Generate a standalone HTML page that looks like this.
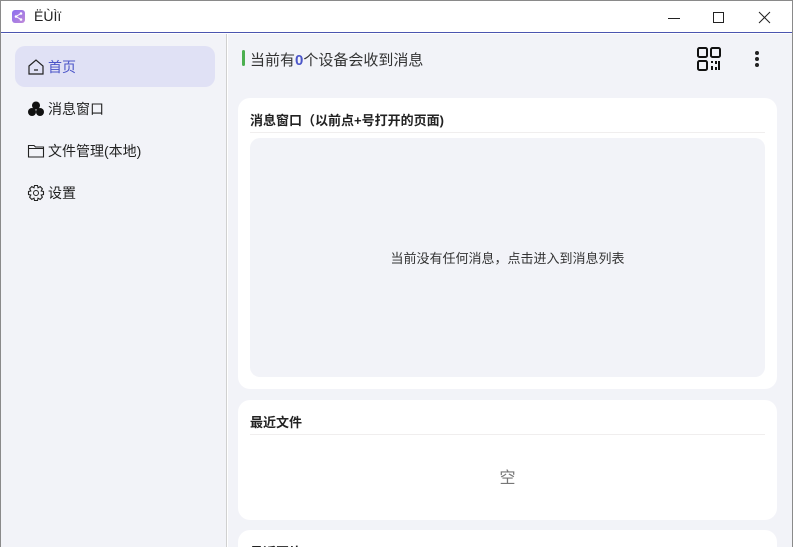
<!DOCTYPE html>
<html><head><meta charset="utf-8"><style>
*{margin:0;padding:0;box-sizing:border-box}
html,body{width:793px;height:547px;overflow:hidden}
body{background:#fff;font-family:"Liberation Sans","Noto Sans CJK SC",sans-serif;position:relative}
.win{position:absolute;left:0;top:0;width:793px;height:547px;border:1px solid #8a8a8a;border-bottom:none;z-index:5;pointer-events:none}
.title{position:absolute;left:1px;top:1px;right:1px;height:32px;background:#fff;border-bottom:1px solid #4b55b0}
.logo{position:absolute;left:11px;top:9px;width:13px;height:13px;border-radius:3px;background:linear-gradient(135deg,#8a6df0,#c08ad8)}
.ttext{position:absolute;left:33px;top:7px;font-size:14px;color:#222}
.side{position:absolute;left:1px;top:34px;width:226px;bottom:0;background:#f2f3f8;border-right:1px solid #d0d0d0}
.main{position:absolute;left:228px;top:34px;right:1px;bottom:0;background:#f2f3f8;overflow:hidden}
.nav{position:absolute;left:14px;width:200px;height:41px;font-size:14px;color:#222;display:flex;align-items:center;padding-left:12px}
.nav.act{background:#e0e1f5;border-radius:10px;color:#4b55c8}
.nav svg{margin-right:3px}
.card{position:absolute;left:10px;width:539px;background:#fff;border-radius:12px;overflow:hidden}
.ch{position:absolute;left:12px;right:12px;top:12px;font-size:13px;font-weight:bold;color:#222;height:23px;border-bottom:1px solid #f0eeee}
</style></head><body>
<div class="win"></div>
<div class="title"><div class="logo"></div>
<svg style="position:absolute;left:13px;top:11px" width="9" height="9" viewBox="0 0 9 9"><circle cx="7" cy="1.5" r="1.3" fill="#fff"/><circle cx="2" cy="4.5" r="1.3" fill="#fff"/><circle cx="7" cy="7.5" r="1.3" fill="#fff"/><path d="M7 1.5L2 4.5L7 7.5" stroke="#fff" fill="none"/></svg>
<div class="ttext">ËÙÌï</div>
<svg style="position:absolute;left:666px;top:10px" width="14" height="14"><path d="M1 7.5H13" stroke="#222"/></svg>
<svg style="position:absolute;left:710px;top:10px" width="14" height="14"><rect x="2.5" y="1.5" width="10" height="10" stroke="#222" fill="none"/></svg>
<svg style="position:absolute;left:756px;top:10px" width="14" height="14"><path d="M2 1L13 12M13 1L2 12" stroke="#222"/></svg>
</div>
<div class="side">
<div class="nav act" style="top:12px"><svg width="18" height="18" viewBox="0 0 18 18"><path d="M2 8L9 2L16 8V16H2Z M7 12H11" stroke="#222" stroke-width="1.2" fill="none"/></svg>首页</div>
<div class="nav" style="top:54px"><svg width="18" height="18" viewBox="0 0 18 18"><circle cx="9" cy="5.5" r="4" fill="#111"/><circle cx="5" cy="12" r="4" fill="#111"/><circle cx="13" cy="12" r="4" fill="#111"/></svg>消息窗口</div>
<div class="nav" style="top:96px"><svg width="18" height="18" viewBox="0 0 18 18"><path d="M1.5 3.5H7L8.5 5H16.5V15H1.5Z M1.5 6.5H16.5" stroke="#222" stroke-width="1.1" fill="none"/></svg>文件管理(本地)</div>
<div class="nav" style="top:138px"><svg width="18" height="18" viewBox="0 0 18 18"><circle cx="9" cy="9" r="2.5" stroke="#222" fill="none"/><path d="M7.5 1.5H10.5L11 3.8L13.2 2.6L15.4 4.8L14.2 7L16.5 7.5V10.5L14.2 11L15.4 13.2L13.2 15.4L11 14.2L10.5 16.5H7.5L7 14.2L4.8 15.4L2.6 13.2L3.8 11L1.5 10.5V7.5L3.8 7L2.6 4.8L4.8 2.6L7 3.8Z" stroke="#222" fill="none" stroke-width="1.1"/></svg>设置</div>
</div>
<div class="main">
<div style="position:absolute;left:14px;top:16px;width:3px;height:16px;background:#4caf50;border-radius:2px"></div>
<div style="position:absolute;left:22px;top:15px;font-size:15px;color:#333">当前有<span style="color:#4b55c8;font-weight:bold">0</span>个设备会收到消息</div>
<svg style="position:absolute;left:469px;top:13px" width="24" height="24" viewBox="0 0 24 24"><rect x="1" y="1" width="9" height="9" rx="1.5" stroke="#111" stroke-width="2" fill="none"/><rect x="14" y="1" width="9" height="9" rx="1.5" stroke="#111" stroke-width="2" fill="none"/><rect x="1" y="14" width="9" height="9" rx="1.5" stroke="#111" stroke-width="2" fill="none"/><path d="M14 14h2v2h-2zM18 14h2v3h-2zM14 19h2v4h-2zM18 20h2v3h-2zM21 14h2v9h-2z" fill="#111"/></svg>
<svg style="position:absolute;left:526px;top:16px" width="6" height="18"><circle cx="3" cy="3" r="2" fill="#222"/><circle cx="3" cy="9" r="2" fill="#222"/><circle cx="3" cy="15" r="2" fill="#222"/></svg>
<div class="card" style="top:64px;height:291px"><div class="ch">消息窗口（以前点+号打开的页面)</div>
<div style="position:absolute;left:12px;right:12px;top:40px;height:239px;background:#f2f3f8;border-radius:10px;display:flex;align-items:center;justify-content:center;font-size:13px;color:#333">当前没有任何消息，点击进入到消息列表</div></div>
<div class="card" style="top:366px;height:120px"><div class="ch">最近文件</div>
<div style="position:absolute;left:0;right:0;top:64px;text-align:center;font-size:16px;color:#777">空</div></div>
<div class="card" style="top:496px;height:17px;border-radius:12px 12px 0 0"><div class="ch" style="height:5px;border:none">最近图片</div></div>
</div>
</body></html>
